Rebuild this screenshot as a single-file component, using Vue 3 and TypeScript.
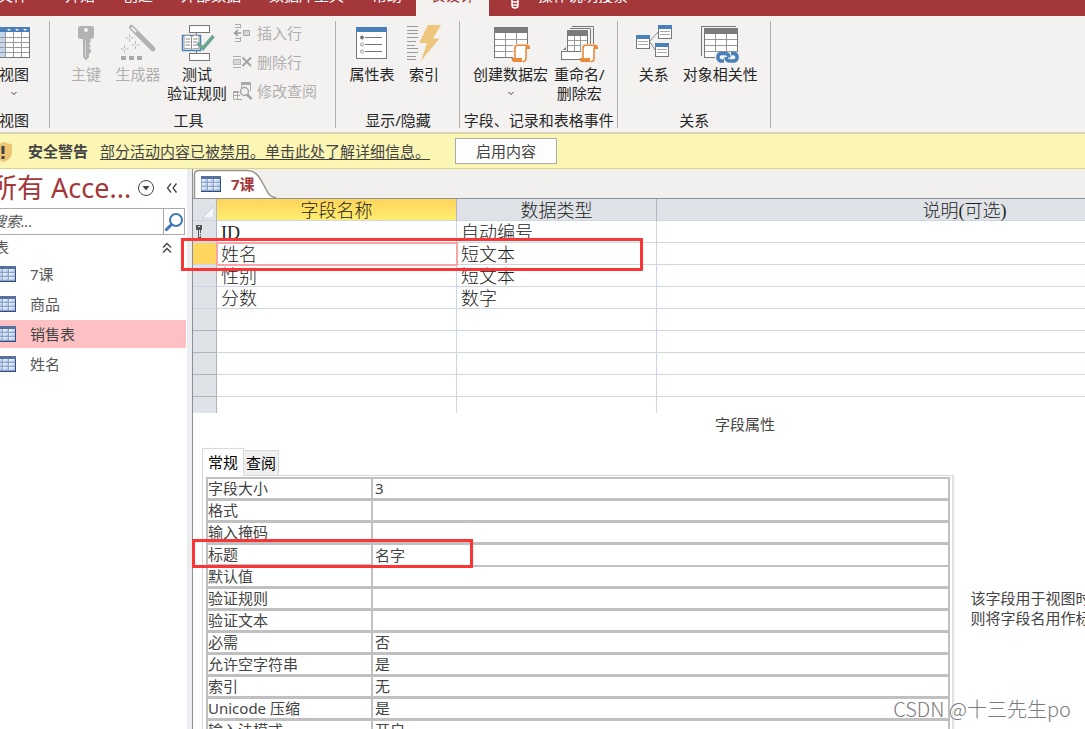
<script setup lang="ts">
import { ref } from 'vue'

interface FieldRow {
  name: string
  type: string
  key?: boolean
  current?: boolean
}

interface PropertyRow {
  label: string
  value: string
  current?: boolean
}

const ribbonTabs = ['文件', '开始', '创建', '外部数据', '数据库工具', '帮助', '表设计']
const activeRibbonTab = ref('表设计')

const tables = ['7课', '商品', '销售表', '姓名']
const selectedTable = ref('销售表')
const search = ref('')

const fields: FieldRow[] = [
  { name: 'ID', type: '自动编号', key: true },
  { name: '姓名', type: '短文本', current: true },
  { name: '性别', type: '短文本' },
  { name: '分数', type: '数字' },
]
const emptyRows = 5

const properties = ref<PropertyRow[]>([
  { label: '字段大小', value: '3' },
  { label: '格式', value: '' },
  { label: '输入掩码', value: '' },
  { label: '标题', value: '名字', current: true },
  { label: '默认值', value: '' },
  { label: '验证规则', value: '' },
  { label: '验证文本', value: '' },
  { label: '必需', value: '否' },
  { label: '允许空字符串', value: '是' },
  { label: '索引', value: '无' },
  { label: 'Unicode 压缩', value: '是' },
  { label: '输入法模式', value: '开启' },
])
</script>

<template>
  <div class="app">
    <svg class="defs" aria-hidden="true">
      <defs>
        <linearGradient id="cell-blue" x1="0" y1="0" x2="1" y2="1">
          <stop offset="0" stop-color="#ffffff" />
          <stop offset="1" stop-color="#9db9e3" />
        </linearGradient>
        <symbol id="datasheet" viewBox="0 0 20 16">
          <rect width="20" height="16" fill="#8ba3cc" />
          <rect width="20" height="3" fill="#56719f" />
          <g fill="url(#cell-blue)">
            <rect x="1" y="3" width="5" height="3" /><rect x="7" y="3" width="5" height="3" /><rect x="13" y="3" width="6" height="3" />
            <rect x="1" y="7" width="5" height="3" /><rect x="7" y="7" width="5" height="3" /><rect x="13" y="7" width="6" height="3" />
            <rect x="1" y="11" width="5" height="3" /><rect x="7" y="11" width="5" height="3" /><rect x="13" y="11" width="6" height="3" />
          </g>
          <path d="M0 15.5H20M19.5 3V16" stroke="#324c7c" />
        </symbol>
        <symbol id="scroll" viewBox="0 0 20 19">
          <path d="M5 1.5H17Q15 2 15 5V17H4V4Q4 2 5 1.5Z" fill="#fff" />
          <path d="M4 14V4Q4 1.300 6.500 1.300H17Q15 2 15 5V14Q15 17.500 12 17.500" fill="none" stroke="#e88b3c" stroke-width="1.600" />
          <path d="M15 5V4Q15 1 17 1Q19 1 19 4V5Z" fill="#e88b3c" />
          <path d="M.5 14H11V16Q11 18 13 18H3Q.5 18 .5 14Z" fill="#e88b3c" />
        </symbol>
      </defs>
    </svg>

    <header class="titlebar">
      <nav class="ribbon-tabs" aria-label="功能区">
        <button
          v-for="tab in ribbonTabs"
          :key="tab"
          class="ribbon-tab"
          :class="{ active: tab === activeRibbonTab }"
          type="button"
          @click="activeRibbonTab = tab"
        >{{ tab }}</button>
      </nav>
      <button class="tell-me" type="button">
        <svg width="12" height="20" viewBox="0 0 12 20" fill="none" stroke="#fff" stroke-width="1.500" aria-hidden="true">
          <path d="M3 12V10Q1 8 1 5.500A5 5 0 0 1 11 5.500Q11 8 9 10V12V15Q9 18 6 18Q3 18 3 15V12H9M3 15H9" />
        </svg>
        <span>操作说明搜索</span>
      </button>
    </header>

    <section class="ribbon" aria-label="表设计">
      <div class="group first">
        <div class="tools">
          <button class="big" type="button">
            <svg class="icon" viewBox="0 0 36 36" aria-hidden="true">
              <rect x="2.500" y="2.500" width="31" height="30" fill="#fff" />
              <rect x="3" y="7" width="6" height="25" fill="#c3d6ee" />
              <path d="M3 12.500H33M3 17.500H33M3 22.500H33M3 27.500H33M9.500 7V32M17.500 7V32M25.500 7V32" stroke="#9a9a9a" />
              <rect x="2.500" y="2.500" width="31" height="30" fill="none" stroke="#777" />
              <rect x="2" y="2" width="32" height="5" fill="#4a80b9" />
              <path d="M11 4H15L13 6ZM19 4H23L21 6ZM27 4H31L29 6Z" fill="#fff" />
            </svg>
            <span>视图</span>
            <svg class="caret" viewBox="0 0 8 19" aria-hidden="true"><path d="M1.500 8L4 10.500L6.500 8" /></svg>
          </button>
        </div>
        <h2>视图</h2>
      </div>

      <div class="group">
        <div class="tools">
          <button class="big" type="button" disabled>
            <svg class="icon" viewBox="0 0 36 36" aria-hidden="true">
              <path fill-rule="evenodd" d="M12 1H24Q26 1 26 3V11Q26 14 22.500 14V17L21 19L23 21L21 23L23 25V27L21 29V32L18 35.500L15 32V14H12Q10 14 10 11V3Q10 1 12 1ZM18 3A2 2 0 1 0 18 7A2 2 0 1 0 18 3Z" fill="#b4b2b3" />
              <path d="M17.500 16V32" stroke="#d8d6d7" />
            </svg>
            <span>主键</span>
          </button>
          <button class="big" type="button" disabled>
            <svg class="icon" viewBox="0 0 36 36" aria-hidden="true">
              <path d="M11.500 2.500L33 24" stroke="#b4b2b3" stroke-width="5" stroke-linecap="round" />
              <path d="M12 3L15.500 6.500" stroke="#f3f2f1" stroke-width="2" stroke-linecap="round" />
              <path d="M9.500 9V12M9.500 14V17M5.500 13H8.500M10.500 13H13.500M15.500 16V19M15.500 21V24M11.500 20H14.500M16.500 20H19.500M4.500 20V23M4.500 25V28M.5 24H3.500M5.500 24H8.500" stroke="#bdbbbc" />
              <path d="M1 31H6V35H1ZM9 31H14V35H9ZM17 31H22V35H17Z" fill="#aaa8a9" />
            </svg>
            <span>生成器</span>
          </button>
          <button class="big" type="button">
            <svg class="icon" viewBox="0 0 36 36" aria-hidden="true">
              <g fill="#fff" stroke="#777">
                <path d="M17.500 7V11M17.500 25V29" />
                <rect x="10.500" y=".5" width="20" height="7" /><rect x="10.500" y="28.500" width="20" height="7" />
              </g>
              <path d="M3.500 10.500H21.500V25.500H3.500Z" fill="#fff" stroke="#4a80b9" stroke-width="1.500" />
              <path d="M5 11Q10 9 12.500 12Q15 9 20 11V24Q15 22.500 12.500 24.500Q10 22.500 5 24Z" fill="#fff" stroke="#999" />
              <path d="M12.500 12V24M6.500 14H11M6.500 17H11M6.500 20H11M14 14H18.500M14 17H18.500M14 20H18.500" stroke="#888" />
              <path d="M18.500 18L24 23.500L34.500 11" fill="none" stroke="#6ca796" stroke-width="3.500" />
            </svg>
            <span>测试<br />验证规则</span>
          </button>
          <div class="small-list">
            <button class="small" type="button" disabled>
              <svg viewBox="0 0 20 20" aria-hidden="true">
                <path d="M2 1.500H7.500V5M2 4.500H7M2 15.500H7M2 18.500H7.500V14" fill="none" stroke="#aaa" />
                <path d="M8 10H2M5 7L1.500 10L5 13" fill="none" stroke="#999" stroke-width="1.500" />
                <rect x="10.500" y="7.500" width="6" height="5" fill="#d8d6d8" stroke="#aaa" />
              </svg>
              <span>插入行</span>
            </button>
            <button class="small" type="button" disabled>
              <svg viewBox="0 0 20 20" aria-hidden="true">
                <path d="M0 4.500H8M0 15.500H8" stroke="#aaa" />
                <rect x=".5" y="7.500" width="7" height="5" fill="#d8d6d8" stroke="#bbb" />
                <path d="M9.500 5.500L18 14M18 5.500L9.500 14" stroke="#a4a2a3" stroke-width="2" />
              </svg>
              <span>删除行</span>
            </button>
            <button class="small" type="button" disabled>
              <svg viewBox="0 0 20 20" aria-hidden="true">
                <path d="M8.500 7V1.500H17.500V10M.5 10.500H6M.5 18.500H9M.5 10V18M4.500 10V18M0 14.500H7" fill="none" stroke="#aaa" />
                <path d="M8 1H18V4H8ZM0 10H6V12H0Z" fill="#aaa" />
                <circle cx="11.500" cy="10.500" r="4" fill="#f3f2f1" stroke="#a4a2a3" stroke-width="1.500" />
                <path d="M14 13.500L18.500 18" stroke="#a4a2a3" stroke-width="2.500" />
              </svg>
              <span>修改查阅</span>
            </button>
          </div>
        </div>
        <h2>工具</h2>
      </div>

      <div class="group">
        <div class="tools">
          <button class="big" type="button">
            <svg class="icon" viewBox="0 0 36 36" aria-hidden="true">
              <rect x="2.500" y="2.500" width="30" height="31" fill="#fff" stroke="#777" />
              <rect x="2" y="2" width="31" height="5" fill="#4a80b9" />
              <path d="M11 12.500H28M11 19.500H28M11 26.500H28" stroke="#777" />
              <circle cx="8" cy="12.500" r="2" fill="#777" />
              <g fill="#fff" stroke="#999"><circle cx="8" cy="19.500" r="1.500" /><circle cx="8" cy="26.500" r="1.500" /></g>
            </svg>
            <span>属性表</span>
          </button>
          <button class="big" type="button">
            <svg class="icon" viewBox="0 0 36 36" aria-hidden="true">
              <path d="M1 1.500H12M1 5.500H12M1 8.500H12M1 12.500H12M1 16.500H10M1 20.500H9M1 23.500H12M1 27.500H12M1 31.500H10M1 34.500H10" stroke="#999" />
              <path d="M22 0H35L27 13.500H33.500L15 36L21 18H13Z" fill="#eec67c" />
            </svg>
            <span>索引</span>
          </button>
        </div>
        <h2>显示/隐藏</h2>
      </div>

      <div class="group">
        <div class="tools">
          <button class="big" type="button">
            <svg class="icon" viewBox="0 0 36 36" aria-hidden="true">
              <rect x="1.500" y="2.500" width="33" height="30" fill="#fff" stroke="#777" />
              <path d="M2 14.500H34M2 20.500H34M2 26.500H34M12.500 8V32M23.500 8V32" stroke="#999" />
              <rect x="1" y="2" width="34" height="6" fill="#7b7b7b" />
              <rect x="20" y="19" width="15" height="17" fill="#f3f2f1" />
              <use href="#scroll" x="18" y="19" width="20" height="19" />
            </svg>
            <span>创建数据宏</span>
            <svg class="caret" viewBox="0 0 8 19" aria-hidden="true"><path d="M1.500 8L4 10.500L6.500 8" /></svg>
          </button>
          <button class="big" type="button">
            <svg class="icon" viewBox="0 0 36 36" aria-hidden="true">
              <path d="M11 1.500H32.500V20M9 3.500H29.500V20" fill="none" stroke="#777" />
              <rect x="6.500" y="5.500" width="20" height="21" fill="#fff" stroke="#777" />
              <path d="M7 15.500H26M7 20.500H26M13.500 11V26M19.500 11V26" stroke="#999" />
              <rect x="6" y="5" width="21" height="6" fill="#7b7b7b" />
              <rect x=".5" y="26.500" width="22" height="8" fill="#fff" stroke="#777" />
              <path d="M2 25L5 22V25Z" fill="#777" />
              <rect x="20" y="19" width="14" height="17" fill="#f3f2f1" />
              <use href="#scroll" x="18" y="19" width="20" height="19" />
            </svg>
            <span>重命名/<br />删除宏</span>
          </button>
        </div>
        <h2>字段、记录和表格事件</h2>
      </div>

      <div class="group">
        <div class="tools">
          <button class="big" type="button">
            <svg class="icon" viewBox="0 0 36 36" aria-hidden="true">
              <path d="M14 16L22 7M14 17L19 25" stroke="#888" />
              <g fill="#fff" stroke="#777">
                <rect x=".5" y="10.500" width="13" height="13" /><rect x="22.500" y=".5" width="13" height="13" /><rect x="19.500" y="18.500" width="13" height="13" />
              </g>
              <path d="M0 10H14V14H0ZM22 0H36V4H22ZM19 18H33V22H19Z" fill="#4a80b9" />
              <path d="M2 16.500H12M2 19.500H12M24 6.500H34M24 9.500H34M21 24.500H31M21 27.500H31" stroke="#aaa" />
            </svg>
            <span>关系</span>
          </button>
          <button class="big" type="button">
            <svg class="icon" viewBox="0 0 36 36" aria-hidden="true">
              <path d="M-.5 31V1.500H34" fill="none" stroke="#777" />
              <rect x="2.500" y="3.500" width="33" height="29" fill="#fff" stroke="#777" />
              <path d="M3 14.500H35M3 20.500H35M3 26.500H35M13.500 9V32M24.500 9V32" stroke="#999" />
              <rect x="2" y="3" width="34" height="6" fill="#7b7b7b" />
              <path d="M13 27H36V36H13Z" fill="#f3f2f1" />
              <path d="M22 36H18.500A4 4 0 0 1 18.500 28.500H23Q27 28.500 27 32.500M29 28.500H32.500A4 4 0 0 1 32.500 36H28Q24 36 24 32" fill="none" stroke="#4a80b9" stroke-width="3.500" />
            </svg>
            <span>对象相关性</span>
          </button>
        </div>
        <h2>关系</h2>
      </div>
    </section>

    <section class="message-bar" aria-label="安全警告">
      <svg class="shield" viewBox="0 0 18 22" aria-hidden="true">
        <path d="M9 1Q13 3 17 3V11Q17 18 9 21Q1 18 1 11V3Q5 3 9 1Z" fill="#eec374" />
        <path d="M8 5V13M8 15V18" stroke="#444" stroke-width="3" />
      </svg>
      <strong>安全警告</strong>
      <a href="#details">部分活动内容已被禁用。单击此处了解详细信息。</a>
      <button type="button">启用内容</button>
    </section>

    <main class="workspace">
      <aside class="nav-pane">
        <div class="nav-title">
          <h1>所有 Acce...</h1>
          <button class="round" type="button" aria-label="浏览类别">
            <svg width="18" height="18" viewBox="0 0 18 18"><circle cx="9" cy="9" r="7.500" fill="#fff" stroke="#444" /><path d="M5.500 7H12.500L9 11.500Z" fill="#444" /></svg>
          </button>
          <button class="collapse" type="button" aria-label="折叠导航窗格">
            <svg width="12" height="12" viewBox="0 0 12 12" fill="none" stroke="#444" stroke-width="1.300"><path d="M5 1.500L1.500 6L5 10.500M10.500 1.500L7 6L10.500 10.500" /></svg>
          </button>
        </div>
        <form class="search" @submit.prevent>
          <input v-model="search" type="text" placeholder="搜索..." aria-label="搜索" />
          <button type="submit" aria-label="搜索">
            <svg width="20" height="20" viewBox="0 0 20 20" fill="none" stroke="#3f78b5"><circle cx="12" cy="8" r="6" stroke-width="2" /><path d="M7.500 12.500L1.500 18.500" stroke-width="3" /></svg>
          </button>
        </form>
        <button class="category" type="button">
          <span>表</span>
          <svg width="10" height="12" viewBox="0 0 10 12" fill="none" stroke="#444" stroke-width="1.300" aria-hidden="true"><path d="M1 5.500L5 1.500L9 5.500M1 10.500L5 6.500L9 10.500" /></svg>
        </button>
        <ul>
          <li v-for="table in tables" :key="table">
            <button
              type="button"
              class="object"
              :class="{ selected: table === selectedTable }"
              @click="selectedTable = table"
            >
              <svg width="20" height="16" aria-hidden="true"><use href="#datasheet" /></svg>
              <span>{{ table }}</span>
            </button>
          </li>
        </ul>
      </aside>

      <section class="document">
        <div class="doc-tabs">
          <button class="doc-tab" type="button">
            <svg class="tab-shape" viewBox="0 0 84 29" aria-hidden="true">
              <path d="M1.500 29V6Q1.500 1.500 6 1.500H54Q63 1.500 68 11L74 22Q77 28.500 83 28.500V29Z" fill="#fff" />
              <path d="M1.500 29V6Q1.500 1.500 6 1.500H54Q63 1.500 68 11L74 22Q77 28.500 83 28.500" fill="none" stroke="#9c948c" stroke-width="1.500" />
            </svg>
            <svg class="tab-icon" width="20" height="16" aria-hidden="true"><use href="#datasheet" /></svg>
            <span>7课</span>
          </button>
        </div>

        <table class="field-grid">
          <colgroup><col class="c-select" /><col class="c-name" /><col class="c-type" /><col /></colgroup>
          <thead>
            <tr>
              <td class="corner"><svg width="12" height="12" viewBox="0 0 12 12" aria-hidden="true"><path d="M12 0V12H0Z" fill="#f4f7fb" stroke="#c3ccda" /></svg></td>
              <th scope="col" class="current">字段名称</th>
              <th scope="col">数据类型</th>
              <th scope="col">说明(可选)</th>
            </tr>
          </thead>
          <tbody>
            <tr v-for="field in fields" :key="field.name" :class="{ current: field.current }">
              <td class="selector">
                <svg v-if="field.key" width="8" height="13" viewBox="0 0 8 13" aria-hidden="true"><path d="M1 0H7V5H6V13H3V5H1Z" fill="#555" /><path d="M3 1.500H5M4.500 5V12M5 8.500H7M5 10.500H7" stroke="#ddd" /></svg>
              </td>
              <td class="name">{{ field.name }}</td>
              <td>{{ field.type }}</td>
              <td></td>
            </tr>
            <tr v-for="n in emptyRows" :key="n" class="empty">
              <td class="selector"></td><td></td><td></td><td></td>
            </tr>
          </tbody>
        </table>

        <h2 class="pane-title">字段属性</h2>

        <div class="properties">
          <div class="sheet">
            <div class="sheet-tabs" role="tablist">
              <button class="active" type="button" role="tab" aria-selected="true">常规</button>
              <button type="button" role="tab" aria-selected="false">查阅</button>
            </div>
            <div class="sheet-body">
              <table class="property-grid">
                <colgroup><col class="c-label" /><col /></colgroup>
                <tbody>
                  <tr v-for="(property, index) in properties" :key="property.label" :class="{ current: property.current }">
                    <th scope="row"><label :for="'property-' + index">{{ property.label }}</label></th>
                    <td><input :id="'property-' + index" v-model="property.value" type="text" /></td>
                  </tr>
                </tbody>
              </table>
            </div>
          </div>
          <p class="hint">该字段用于视图时<br />则将字段名用作标</p>
        </div>
      </section>

      <div class="mark mark-field" aria-hidden="true"></div>
      <div class="mark mark-caption" aria-hidden="true"></div>
    </main>

    <div class="watermark">CSDN @十三先生po</div>
  </div>
</template>

<style>
body {
  margin: 0;
  overflow: hidden;
}
</style>

<style scoped>
.app {
  position: relative;
  display: flex;
  flex-direction: column;
  height: 100vh;
  overflow: hidden;
  background: #fff;
  color: #262626;
  font: 15px/19px "Noto Sans", "Noto Sans CJK SC", sans-serif;
}
.defs {
  position: absolute;
  width: 0;
  height: 0;
}
button,
input {
  margin: 0;
  padding: 0;
  border: 0;
  background: none;
  color: inherit;
  font: inherit;
}
h1,
h2,
p,
ul {
  margin: 0;
  padding: 0;
  font-weight: 400;
  font-size: 15px;
  list-style: none;
}

/* Title bar */
.titlebar {
  display: flex;
  align-items: flex-end;
  flex: none;
  height: 16px;
  overflow: hidden;
  background: #a4373a;
  color: #fff;
  line-height: 42px;
}
.ribbon-tabs {
  display: flex;
  margin-left: -16px;
}
.ribbon-tab {
  padding: 0 14px;
  white-space: nowrap;
}
.ribbon-tab:first-child {
  margin-right: 9px;
}
.ribbon-tab.active {
  background: #f3f2f1;
  color: #a4373a;
}
.tell-me {
  display: flex;
  align-items: center;
  gap: 17px;
  margin-left: 20px;
}
.tell-me svg {
  margin-top: 10px;
}

/* Ribbon */
.ribbon {
  display: flex;
  flex: none;
  padding: 5px 0 4px;
  border-bottom: 1px solid #cfcfcf;
  background: #f3f2f1;
}
.group {
  display: flex;
  flex-direction: column;
  flex: none;
  box-sizing: border-box;
  padding: 0 9px 0 10px;
  border-right: 1px solid #b3b1b0;
}
.group:nth-child(2) {
  padding-right: 18px;
}
.group.first {
  margin-left: -22px;
}
.group h2 {
  height: 17px;
  margin: 0 -7px;
  line-height: 18px;
  text-align: center;
  white-space: nowrap;
}
.tools {
  display: flex;
  align-items: flex-start;
  height: 90px;
}
.big {
  display: flex;
  flex-direction: column;
  align-items: center;
  min-width: 52px;
  padding: 4px 3px 0;
  text-align: center;
  white-space: nowrap;
}
.icon {
  width: 36px;
  height: 36px;
  margin-bottom: 4px;
  overflow: visible;
}
.caret {
  width: 8px;
  height: 19px;
  fill: none;
  stroke: #444;
}
button:disabled {
  color: #b1afae;
}
.small-list {
  display: flex;
  flex-direction: column;
  gap: 5px;
  padding-left: 3px;
}
.small {
  display: flex;
  align-items: center;
  gap: 4px;
  height: 24px;
  white-space: nowrap;
}
.small svg {
  width: 20px;
  height: 20px;
}

/* Message bar */
.message-bar {
  display: flex;
  align-items: center;
  flex: none;
  box-sizing: border-box;
  height: 36px;
  border: solid #d9d58b;
  border-width: 1px 0;
  background: #fcf6b5;
  color: #444;
  white-space: nowrap;
}
.shield {
  width: 18px;
  height: 22px;
  margin: 2px 15px 0 -5px;
}
.message-bar a {
  margin: 0 25px 0 12px;
  color: inherit;
  text-underline-offset: 2px;
}
.message-bar button {
  box-sizing: border-box;
  width: 102px;
  height: 26px;
  border: 1px solid #ababab;
  background: #fdfdfd;
}

/* Navigation pane */
.workspace {
  position: relative;
  display: flex;
  flex: 1;
  min-height: 0;
}
.nav-pane {
  flex: none;
  box-sizing: border-box;
  width: 203px;
  margin-left: -10px;
  padding-right: 6px;
  border-right: 1px solid #8a9099;
  background: linear-gradient(to left, #ebedf0 5px, #fff 5px);
  color: #595959;
}
.nav-title {
  display: flex;
  align-items: center;
  height: 38px;
}
.nav-title h1 {
  width: 147px;
  color: #a4373a;
  font-size: 27px;
  line-height: 38px;
  white-space: nowrap;
}
.nav-title button {
  display: flex;
}
.collapse {
  margin-left: 11px;
}
.search {
  display: flex;
  box-sizing: border-box;
  height: 27px;
  margin: 1px 1px 0 0;
  border: 1px solid #ababab;
}
.search input {
  flex: 1;
  min-width: 0;
  font-style: italic;
}
.search input::placeholder {
  color: #595959;
  opacity: 1;
}
.search button {
  display: flex;
  align-items: center;
  justify-content: center;
  width: 21px;
  border-left: 1px solid #ababab;
}
.category {
  display: flex;
  align-items: center;
  justify-content: space-between;
  width: 100%;
  height: 25px;
  padding: 0 14px 0 4px;
}
.object {
  display: flex;
  align-items: center;
  gap: 14px;
  width: 100%;
  height: 28px;
  margin-bottom: 2px;
  padding-left: 6px;
}
.object.selected {
  background: #fdc1c4;
  color: #444;
}

/* Document */
.document {
  flex: 1;
  min-width: 0;
  overflow: hidden;
}
.doc-tabs {
  display: flex;
  height: 29px;
  border-bottom: 1px solid #8d929b;
  background: #f1f0ef;
}
.doc-tab {
  position: relative;
  display: flex;
  align-items: center;
  gap: 10px;
  height: 30px;
  padding: 0 29px 0 8px;
  color: #a4373a;
  font-weight: 700;
}
.tab-shape {
  position: absolute;
  left: 0;
  top: 0;
  width: 84px;
  height: 29px;
}
.tab-icon,
.doc-tab span {
  position: relative;
}
.field-grid {
  width: calc(100% + 188px);
  border-spacing: 0;
  table-layout: fixed;
  color: #222;
  font: 18px/21px "Liberation Serif", "Noto Sans CJK SC", serif;
}
.c-select {
  width: 24px;
}
.c-name {
  width: 240px;
}
.c-type {
  width: 200px;
}
.field-grid td,
.field-grid th {
  box-sizing: border-box;
  height: 22px;
  padding: 3px 4px 0;
  border: solid #ced6e3;
  border-width: 0 1px 1px 0;
  font-weight: 300;
  line-height: 18px;
  white-space: nowrap;
}
.field-grid th,
.field-grid .corner,
.field-grid .selector {
  border-right-color: #b0b5bd;
  background: #dfe2e7;
}
.field-grid th.current {
  background: linear-gradient(#ffd45a, #ffee70);
}
.field-grid .corner,
.field-grid .selector {
  padding: 0 2px;
}
.corner svg {
  display: block;
  margin: 5px 0 0 7px;
}
.selector svg {
  display: block;
}
.empty .selector {
  border-bottom-color: #b0b5bd;
}
.current .selector {
  background: #ffd65e;
}
.current .name {
  outline: 2px solid #f8a5a9;
  outline-offset: -1px;
}
.field-grid tr:last-child td {
  height: 16px;
  border-bottom: 0;
}
.field-grid thead tr:last-child td {
  height: 22px;
  border-bottom: 1px solid #ced6e3;
}
.pane-title {
  width: calc(100% + 188px);
  height: 24px;
  padding-left: 24px;
  box-sizing: border-box;
  color: #444;
  line-height: 23px;
  text-align: center;
}

/* Field properties */
.properties {
  display: flex;
  align-items: flex-start;
  padding: 11px 0 0 9px;
  color: #444;
}
.sheet {
  flex: none;
  width: 85%;
}
.sheet-tabs {
  display: flex;
  align-items: flex-end;
  height: 27px;
  color: #000;
}
.sheet-tabs button {
  box-sizing: border-box;
  width: 35px;
  height: 25px;
  border: 1px solid #d9d9d9;
  border-width: 1px 1px 0 0;
  background: #f0f0f0;
}
.sheet-tabs .active {
  position: relative;
  width: 42px;
  height: 28px;
  margin-bottom: -1px;
  border-left-width: 1px;
  background: #fff;
}
.sheet-body {
  padding: 1px 2px 0 3px;
  border: solid #d9d9d9;
  border-width: 1px 1px 0;
  box-shadow: 2px 0 #f0f0f0;
}
.property-grid {
  width: 100%;
  border-spacing: 0;
  table-layout: fixed;
  border: solid #c0c0c0;
  border-width: 2px 2px 0;
}
.c-label {
  width: 165px;
}
.property-grid th,
.property-grid td {
  box-sizing: border-box;
  height: 22px;
  padding: 0;
  border-bottom: 3px solid #c0c0c0;
  font-weight: 400;
  line-height: 19px;
  text-align: left;
  white-space: nowrap;
}
.property-grid th {
  border-right: 2px solid #c0c0c0;
}
.property-grid input {
  display: block;
  box-sizing: border-box;
  width: 100%;
  height: 19px;
  padding: 0 2px;
}
.property-grid .current td {
  border-bottom-width: 2px;
}
.hint {
  padding: 140px 0 0 18px;
  line-height: 20px;
  white-space: nowrap;
}

/* Highlight frames and watermark, laid over the window */
.mark {
  position: absolute;
  box-sizing: border-box;
  border: 3px solid #fb3536;
}
.mark-field {
  left: 181px;
  top: 69px;
  width: 462px;
  height: 33px;
}
.mark-caption {
  left: 192px;
  top: 370px;
  width: 281px;
  height: 29px;
}
.watermark {
  position: absolute;
  right: 14px;
  bottom: 8px;
  color: #7c7c7c;
  font: 300 20px/24px "Noto Sans CJK SC", sans-serif;
  text-shadow: 1px 1px #fff;
}
</style>
